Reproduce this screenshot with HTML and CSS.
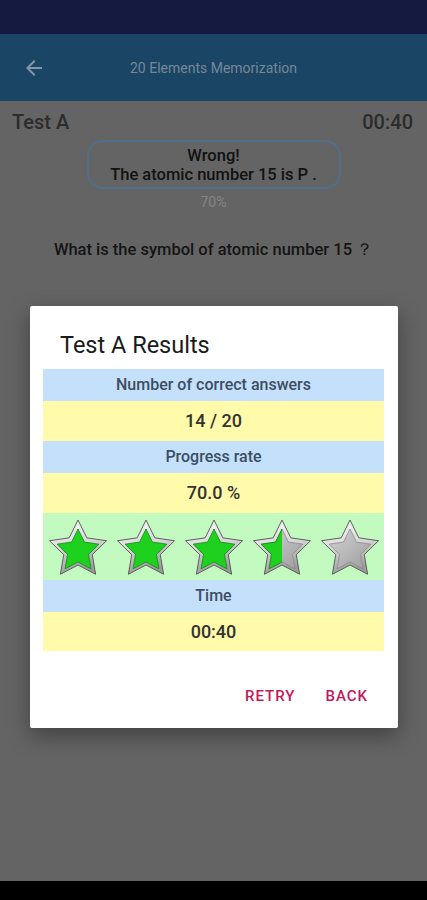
FILE: index.html
```html
<!DOCTYPE html>
<html>
<head>
    <title>20 Elements Memorization</title>
    <link rel="stylesheet" href="styles.css">
</head>
<body>
    <svg class="defs" width="0" height="0">
        <defs>
            <linearGradient id="silver" x1="0" y1="0" x2="0.3" y2="1">
                <stop offset="0" stop-color="#fdfdfd"/>
                <stop offset="0.55" stop-color="#d8d8d8"/>
                <stop offset="1" stop-color="#9a9a9a"/>
            </linearGradient>
            <linearGradient id="grey" x1="0" y1="0" x2="1" y2="1">
                <stop offset="0" stop-color="#d4d4d4"/>
                <stop offset="1" stop-color="#9c9c9c"/>
            </linearGradient>
            <clipPath id="half">
                <rect x="0" y="0" width="30" height="60"/>
            </clipPath>
            <polygon id="outer" points="30,2 38.82,19.86 58.53,22.73 44.27,36.64 47.63,56.27 30,47 12.37,56.27 15.73,36.64 1.47,22.73 21.18,19.86"/>
            <polygon id="inner" points="30,11 36.47,24.1 50.92,26.2 40.46,36.4 42.93,50.8 30,44 17.07,50.8 19.54,36.4 9.08,26.2 23.53,24.1"/>
        </defs>
    </svg>

    <div class="status"></div>

    <div class="appbar">
        <svg class="back" width="24" height="24" viewBox="0 0 24 24">
            <path d="M20 11H7.83l5.59-5.59L12 4l-8 8 8 8 1.41-1.41L7.83 13H20v-2z"/>
        </svg>
        <div class="appbar-title">20 Elements Memorization</div>
    </div>

    <div class="content">
        <div class="test-head">
            <span>Test A</span>
            <span>00:40</span>
        </div>
        <div class="answer-box">
            Wrong!<br>
            The atomic number 15 is P .
        </div>
        <div class="percent">70%</div>
        <div class="question">What is the symbol of atomic number 15 ？</div>
    </div>

    <div class="navbar"></div>

    <div class="dialog">
        <h2>Test A Results</h2>
        <div class="results">
            <div class="label">Number of correct answers</div>
            <div class="value">14 / 20</div>
            <div class="label">Progress rate</div>
            <div class="value">70.0 %</div>
            <div class="stars">
                <svg class="star" viewBox="0 0 60 58"><use href="#outer" class="rim"/><use href="#inner" class="on"/></svg>
                <svg class="star" viewBox="0 0 60 58"><use href="#outer" class="rim"/><use href="#inner" class="on"/></svg>
                <svg class="star" viewBox="0 0 60 58"><use href="#outer" class="rim"/><use href="#inner" class="on"/></svg>
                <svg class="star" viewBox="0 0 60 58"><use href="#outer" class="rim"/><use href="#inner" class="off"/><use href="#inner" class="on" clip-path="url(#half)"/></svg>
                <svg class="star" viewBox="0 0 60 58"><use href="#outer" class="rim"/><use href="#inner" class="off"/></svg>
            </div>
            <div class="label">Time</div>
            <div class="value">00:40</div>
        </div>
        <div class="actions">
            <span class="btn">RETRY</span>
            <span class="btn">BACK</span>
        </div>
    </div>
</body>
</html>
```

FILE: styles.css
```css
body {
    margin: 0;
    width: 427px;
    height: 900px;
    font-family: Roboto, "Noto Sans", sans-serif;
    background-color: #646464;
    display: flex;
    flex-direction: column;
    position: relative;
    overflow: hidden;
}

.defs {
    position: absolute;
}

.status {
    height: 34px;
    background-color: #151a40;
}

.appbar {
    height: 67px;
    background-color: #1b4565;
    display: flex;
    align-items: center;
    padding-left: 22px;
}

.back {
    fill: #8796a6;
}

.appbar-title {
    flex: 1;
    text-align: center;
    margin-right: 46px;
    color: #74889a;
    font-size: 14px;
}

.content {
    flex: 1;
    display: flex;
    flex-direction: column;
    align-items: center;
}

.test-head {
    align-self: stretch;
    display: flex;
    justify-content: space-between;
    padding: 9px 14px 0 12px;
    font-size: 20px;
    font-weight: 500;
    color: #2c2c2c;
}

.answer-box {
    margin-top: 6px;
    width: 250px;
    height: 45px;
    border: 2px solid #4f6f8c;
    border-radius: 16px;
    display: flex;
    flex-direction: column;
    justify-content: center;
    align-items: center;
    text-align: center;
    font-size: 16.5px;
    font-weight: 500;
    line-height: 19px;
    color: #121212;
}

.percent {
    margin-top: 5px;
    font-size: 14px;
    color: #858585;
}

.question {
    margin-top: 29px;
    font-size: 16.5px;
    font-weight: 500;
    color: #151515;
}

.navbar {
    height: 19px;
    background-color: #000;
}

.dialog {
    position: absolute;
    left: 30px;
    top: 306px;
    width: 368px;
    height: 422px;
    background: white;
    border-radius: 2px;
    box-shadow: 0 8px 22px rgba(0,0,0,0.35);
    box-sizing: border-box;
    padding: 0 14px 0 13px;
}

.dialog h2 {
    margin: 26px 0 11px 17px;
    font-size: 23.5px;
    font-weight: 400;
    color: #1a1a1a;
    line-height: 26px;
}

.results {
    display: flex;
    flex-direction: column;
    text-align: center;
}

.label {
    height: 32px;
    line-height: 32px;
    background-color: #c4e0fb;
    color: #3c4e62;
    font-size: 16px;
    font-weight: 500;
}

.value {
    height: 40px;
    line-height: 40px;
    background-color: #fffbaa;
    color: #333;
    font-size: 18px;
    font-weight: 500;
}

.results .value:last-child {
    height: 39px;
    line-height: 39px;
}

.stars {
    height: 67px;
    background-color: #c2fac0;
    display: flex;
    align-items: center;
    gap: 8px;
    padding-left: 5px;
}

.star {
    width: 60px;
    height: 58px;
}

.rim {
    fill: url(#silver);
    stroke: #5e5e5e;
    stroke-width: 1;
}

.on {
    fill: #1fd11f;
    stroke: #138813;
    stroke-width: 0.8;
}

.off {
    fill: url(#grey);
    stroke: #8a8a8a;
    stroke-width: 0.8;
}

.actions {
    display: flex;
    justify-content: flex-end;
    gap: 30px;
    margin-top: 36px;
    padding-right: 16px;
}

.btn {
    color: #c2185b;
    font-size: 15px;
    font-weight: 500;
    letter-spacing: 1px;
}
```
